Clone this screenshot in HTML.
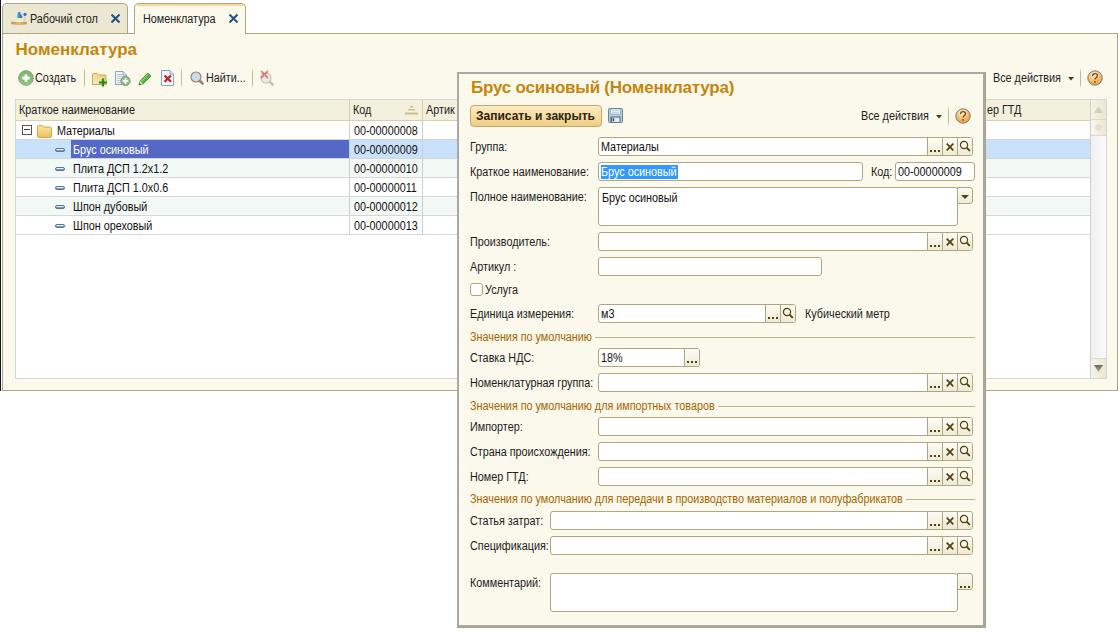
<!DOCTYPE html>
<html><head><meta charset="utf-8"><style>
html,body{margin:0;padding:0;}
body{width:1120px;height:633px;overflow:hidden;background:#fff;position:relative;font-family:'Liberation Sans', sans-serif;}
body>div,body>svg{position:absolute;}
.t{white-space:nowrap;}
.n{transform:scaleX(0.9);transform-origin:0 0;}
</style></head><body>
<div style="left:0px;top:0px;width:1px;height:391px;background:#0B1729"></div>
<div style="left:2px;top:3px;width:126px;height:31px;background:#ECE7D2;border:1px solid #B0A680;border-bottom:none;border-radius:5px 5px 0 0;box-sizing:border-box"></div>
<div style="left:2px;top:33px;width:1116px;height:358px;background:#FBF9EC;border:1px solid #B0A680;box-sizing:border-box"></div>
<div style="left:134px;top:3px;width:112px;height:31px;background:#FBF9EC;border:1px solid #B0A680;border-bottom:none;border-radius:5px 5px 0 0;box-sizing:border-box"></div>
<div style="left:136px;top:4px;width:108px;height:2px;background:#F6D9A0;border-radius:3px 3px 0 0"></div>
<div style="left:135px;top:33px;width:110px;height:1px;background:#FBF9EC"></div>
<div class="t n" style="left:30.3px;top:12px;font-size:12px;line-height:14px;font-weight:normal;color:#1C1C1C">Рабочий стол</div>
<div class="t n" style="left:142.8px;top:12px;font-size:12px;line-height:14px;font-weight:normal;color:#1C1C1C">Номенклатура</div>
<svg style="left:111px;top:14px" width="9" height="9" viewBox="0 0 9 9"><path d="M0.5 0.5L8.5 8.5M8.5 0.5L0.5 8.5" stroke="#22507C" stroke-width="2"/></svg>
<svg style="left:229px;top:14px" width="9" height="9" viewBox="0 0 9 9"><path d="M0.5 0.5L8.5 8.5M8.5 0.5L0.5 8.5" stroke="#22507C" stroke-width="2"/></svg>
<svg style="left:8px;top:8px" width="22" height="20" viewBox="0 0 22 20"><defs><linearGradient id="bd" x1="0" y1="0" x2="1" y2="0"><stop offset="0" stop-color="#D08E58"/><stop offset="0.5" stop-color="#E6B888"/><stop offset="1" stop-color="#C88A50"/></linearGradient><linearGradient id="sh" x1="0" y1="0" x2="1" y2="0"><stop offset="0" stop-color="#B0E0F4"/><stop offset="0.45" stop-color="#3C8CCC"/><stop offset="1" stop-color="#1A62A8"/></linearGradient></defs><path d="M3 13.8 L19 13.8 L18.5 16.3 Q11 17.6 3.5 16.3 Z" fill="url(#bd)"/><path d="M3.2 13.9 L5.5 12 L18 12 L19 13.9 Z" fill="#EED8BC"/><ellipse cx="11" cy="13" rx="4" ry="1" fill="#FFF6EA"/><path d="M7 12.8 L7 9.8 Q10.5 8 14 9.8 L14 12.8 Z" fill="#F2EEA0"/><path d="M8.3 9.6 L9.8 4.2 Q11 3.4 12.2 4.2 L14.6 9.6 Q11.5 10.6 8.3 9.6 Z" fill="url(#sh)"/><path d="M12 5 L16 6.2" stroke="#D4DCE4" stroke-width="1"/><rect x="16" y="7" width="1.8" height="5.2" fill="#D2D6DC"/><circle cx="17" cy="6.4" r="1.6" fill="#2C78C0"/></svg>
<div class="t" style="left:15.5px;top:40px;font-size:17px;line-height:20px;font-weight:bold;color:#C4860C">Номенклатура</div>
<svg style="left:18px;top:70px" width="16" height="16" viewBox="0 0 16 16"><defs><radialGradient id="gg" cx="50%" cy="40%" r="60%"><stop offset="0" stop-color="#6CB45A"/><stop offset="0.7" stop-color="#80C070"/><stop offset="1" stop-color="#A8D89A"/></radialGradient></defs><circle cx="8" cy="8" r="7.3" fill="url(#gg)" stroke="#8A8F88" stroke-width="1"/><path d="M8 4.2V11.8M4.2 8H11.8" stroke="#fff" stroke-width="2.8"/></svg>
<div class="t n" style="left:34.8px;top:71px;font-size:12px;line-height:14px;font-weight:normal;color:#1C1C1C">Создать</div>
<div style="left:84px;top:68px;width:1px;height:20px;background:linear-gradient(#FBF9EC,#C4B894 20%,#C4B894 80%,#FBF9EC)"></div>
<svg style="left:91px;top:72px" width="17" height="15" viewBox="0 0 17 15"><defs><linearGradient id="fpg" x1="0" y1="1" x2="1" y2="0"><stop offset="0" stop-color="#FBF0C0"/><stop offset="1" stop-color="#E8C870"/></linearGradient></defs><path d="M1.5 2.5 Q1.5 1.5 2.5 1.5 L6 1.5 L7.5 3 L14 3 Q15 3 15 4 L15 12.5 L1.5 12.5Z" fill="url(#fpg)" stroke="#CFA650"/><path d="M8 10.5H16M12 6.5V14.5" stroke="#1E8C1E" stroke-width="2.2"/></svg>
<svg style="left:114px;top:70px" width="17" height="17" viewBox="0 0 17 17"><path d="M1.5 1.5H9L12.5 5V14.5H1.5Z" fill="#F2F6FA" stroke="#8AA4BE"/><path d="M9 1.5V5H12.5" fill="#DDE6EE" stroke="#8AA4BE"/><path d="M3 4.5H8M3 6.5H10M3 8.5H7M3 10.5H7M3 12.5H7" stroke="#AFC2D6" stroke-width="0.9"/><circle cx="11.5" cy="11" r="4.6" fill="#8CC27A" stroke="#7E967A" stroke-width="1"/><path d="M11.5 8.3V13.7M8.8 11H14.2" stroke="#fff" stroke-width="1.8"/></svg>
<svg style="left:138px;top:71px" width="14" height="15" viewBox="0 0 14 15"><path d="M1 14 L2 10 L10 2 L13 5 L5 13Z" fill="#4DB83A" stroke="#2A7A22" stroke-width="0.7"/><path d="M3 10.5 L10.5 3" stroke="#A8E890" stroke-width="1"/><path d="M1 14 L2 10 L5 13Z" fill="#E8F0E0"/><path d="M1 14 L1.6 11.8 L3.2 13.4Z" fill="#24501C"/></svg>
<svg style="left:160px;top:69px" width="15" height="18" viewBox="0 0 15 18"><path d="M1.5 1.5H10L13.5 5V16.5H1.5Z" fill="#F2F6FA" stroke="#8AA4BE"/><path d="M10 1.5V5H13.5" fill="#DDE6EE" stroke="#8AA4BE"/><path d="M4.5 6.5L11 12.8M11 6.5L4.5 12.8" stroke="#C42020" stroke-width="2.2"/></svg>
<div style="left:181px;top:68px;width:1px;height:20px;background:linear-gradient(#FBF9EC,#C4B894 20%,#C4B894 80%,#FBF9EC)"></div>
<svg style="left:190px;top:71px;opacity:1" width="15" height="15" viewBox="0 0 15 15"><path d="M9 9L12.5 12.5" stroke="#A08068" stroke-width="2.6" stroke-linecap="round"/><circle cx="6" cy="6" r="5" fill="#CADCF0" stroke="#9A8272" stroke-width="1.2"/></svg>
<div class="t n" style="left:205.8px;top:71px;font-size:12px;line-height:14px;font-weight:normal;color:#1C1C1C">Найти...</div>
<div style="left:252px;top:68px;width:1px;height:20px;background:linear-gradient(#FBF9EC,#C4B894 20%,#C4B894 80%,#FBF9EC)"></div>
<svg style="left:260px;top:72px;opacity:0.45" width="15" height="15" viewBox="0 0 15 15"><path d="M9 9L12.5 12.5" stroke="#A08068" stroke-width="2.6" stroke-linecap="round"/><circle cx="6" cy="6" r="5" fill="#CADCF0" stroke="#9A8272" stroke-width="1.2"/></svg>
<svg style="left:260px;top:70px;opacity:0.55" width="9" height="9" viewBox="0 0 9 9"><path d="M1 1L8 8M8 1L1 8" stroke="#D03030" stroke-width="2"/></svg>
<div class="t n" style="left:993.3px;top:71px;font-size:12px;line-height:14px;font-weight:normal;color:#1C1C1C">Все действия</div>
<svg style="left:1068px;top:77px" width="6" height="4" viewBox="0 0 6 4"><path d="M0 0H6L3 3.5Z" fill="#4A3A10"/></svg>
<div style="left:1080px;top:68px;width:1px;height:20px;background:linear-gradient(#FBF9EC,#C4B894 20%,#C4B894 80%,#FBF9EC)"></div>
<svg style="left:1087px;top:70px" width="16" height="16" viewBox="0 0 16 16"><defs><radialGradient id="hg" cx="45%" cy="30%" r="75%"><stop offset="0" stop-color="#FFF4DE"/><stop offset="0.6" stop-color="#F6B860"/><stop offset="1" stop-color="#EE9A30"/></radialGradient></defs><circle cx="8" cy="8" r="7.2" fill="url(#hg)" stroke="#7E7A80" stroke-width="1"/><path d="M5.6 6.2 Q5.6 3.6 8 3.6 Q10.4 3.6 10.4 5.7 Q10.4 7 9 7.8 Q8 8.4 8 9.6" fill="none" stroke="#7A4A1E" stroke-width="1.35"/><circle cx="8" cy="11.9" r="0.9" fill="#7A4A1E"/></svg>
<div style="left:15px;top:99px;width:1092px;height:280px;background:#fff;border:1px solid #D6D6D6;box-sizing:border-box"></div>
<div style="left:16px;top:100px;width:1074px;height:20px;background:#F4F0DE"></div>
<div style="left:16px;top:120px;width:1074px;height:1px;background:#D8CFAD"></div>
<div style="left:349px;top:100px;width:1px;height:20px;background:#D6CDAE"></div>
<div style="left:422px;top:100px;width:1px;height:20px;background:#D6CDAE"></div>
<div class="t n" style="left:19.3px;top:103px;font-size:12px;line-height:14px;font-weight:normal;color:#1C1C1C">Краткое наименование</div>
<div class="t n" style="left:353.3px;top:103px;font-size:12px;line-height:14px;font-weight:normal;color:#1C1C1C">Код</div>
<div class="t n" style="left:426.3px;top:103px;font-size:12px;line-height:14px;font-weight:normal;color:#1C1C1C">Артик</div>
<div class="t n" style="left:987.3px;top:103px;font-size:12px;line-height:14px;font-weight:normal;color:#1C1C1C">ер ГТД</div>
<svg style="left:405px;top:106px" width="13" height="9" viewBox="0 0 13 9"><rect x="5" y="0" width="3" height="1.5" fill="#CDBF8C"/><rect x="3" y="3" width="7" height="1.5" fill="#CDBF8C"/><rect x="0" y="6.5" width="13" height="2" fill="#CDBF8C"/></svg>
<div style="left:16px;top:121px;width:1074px;height:18px;background:#FFFFFF"></div>
<div style="left:16px;top:139px;width:1074px;height:1px;background:#D2D7DC"></div>
<div style="left:349px;top:121px;width:1px;height:18px;background:#CBCFD3"></div>
<div style="left:422px;top:121px;width:1px;height:18px;background:#CBCFD3"></div>
<div style="left:22px;top:125px;width:10px;height:10px;border:1px solid #555;box-sizing:border-box;background:#fff"></div>
<div style="left:24px;top:129px;width:6px;height:1px;background:#444"></div>
<svg style="left:37px;top:125px" width="15" height="13" viewBox="0 0 15 13"><defs><linearGradient id="fg" x1="0" y1="0" x2="0" y2="1"><stop offset="0" stop-color="#FBE7A8"/><stop offset="1" stop-color="#E9C25C"/></linearGradient></defs><path d="M0.5 2 Q0.5 0.5 2 0.5 L5 0.5 L6.5 2 L13 2 Q14.5 2 14.5 3.5 L14.5 11 Q14.5 12.5 13 12.5 L2 12.5 Q0.5 12.5 0.5 11Z" fill="url(#fg)" stroke="#CFA64A"/></svg>
<div class="t n" style="left:57.3px;top:124px;font-size:12px;line-height:14px;font-weight:normal;color:#111">Материалы</div>
<div class="t n" style="left:353.8px;top:124px;font-size:12px;line-height:14px;font-weight:normal;color:#111">00-00000008</div>
<div style="left:16px;top:140px;width:1074px;height:18px;background:#C9E1FA"></div>
<div style="left:16px;top:158px;width:1074px;height:1px;background:#D2D7DC"></div>
<div style="left:349px;top:140px;width:1px;height:18px;background:#CBCFD3"></div>
<div style="left:422px;top:140px;width:1px;height:18px;background:#CBCFD3"></div>
<div style="left:71px;top:140px;width:278px;height:18px;background:#5468C6"></div>
<svg style="left:55px;top:148px" width="10" height="4" viewBox="0 0 10 4"><rect x="0.5" y="0.5" width="9" height="3" rx="1.5" fill="#7E9AB2" stroke="#587890"/><rect x="1.5" y="1" width="7" height="1" fill="#E4EEF5"/></svg>
<div class="t n" style="left:73.3px;top:143px;font-size:12px;line-height:14px;font-weight:normal;color:#fff">Брус осиновый</div>
<div class="t n" style="left:353.8px;top:143px;font-size:12px;line-height:14px;font-weight:normal;color:#111">00-00000009</div>
<div style="left:16px;top:159px;width:1074px;height:18px;background:#F2F8F3"></div>
<div style="left:16px;top:177px;width:1074px;height:1px;background:#D2D7DC"></div>
<div style="left:349px;top:159px;width:1px;height:18px;background:#CBCFD3"></div>
<div style="left:422px;top:159px;width:1px;height:18px;background:#CBCFD3"></div>
<svg style="left:55px;top:167px" width="10" height="4" viewBox="0 0 10 4"><rect x="0.5" y="0.5" width="9" height="3" rx="1.5" fill="#7E9AB2" stroke="#587890"/><rect x="1.5" y="1" width="7" height="1" fill="#E4EEF5"/></svg>
<div class="t n" style="left:73.3px;top:162px;font-size:12px;line-height:14px;font-weight:normal;color:#111">Плита ДСП 1.2x1.2</div>
<div class="t n" style="left:353.8px;top:162px;font-size:12px;line-height:14px;font-weight:normal;color:#111">00-00000010</div>
<div style="left:16px;top:178px;width:1074px;height:18px;background:#FFFFFF"></div>
<div style="left:16px;top:196px;width:1074px;height:1px;background:#D2D7DC"></div>
<div style="left:349px;top:178px;width:1px;height:18px;background:#CBCFD3"></div>
<div style="left:422px;top:178px;width:1px;height:18px;background:#CBCFD3"></div>
<svg style="left:55px;top:186px" width="10" height="4" viewBox="0 0 10 4"><rect x="0.5" y="0.5" width="9" height="3" rx="1.5" fill="#7E9AB2" stroke="#587890"/><rect x="1.5" y="1" width="7" height="1" fill="#E4EEF5"/></svg>
<div class="t n" style="left:73.3px;top:181px;font-size:12px;line-height:14px;font-weight:normal;color:#111">Плита ДСП 1.0x0.6</div>
<div class="t n" style="left:353.8px;top:181px;font-size:12px;line-height:14px;font-weight:normal;color:#111">00-00000011</div>
<div style="left:16px;top:197px;width:1074px;height:18px;background:#F2F8F3"></div>
<div style="left:16px;top:215px;width:1074px;height:1px;background:#D2D7DC"></div>
<div style="left:349px;top:197px;width:1px;height:18px;background:#CBCFD3"></div>
<div style="left:422px;top:197px;width:1px;height:18px;background:#CBCFD3"></div>
<svg style="left:55px;top:205px" width="10" height="4" viewBox="0 0 10 4"><rect x="0.5" y="0.5" width="9" height="3" rx="1.5" fill="#7E9AB2" stroke="#587890"/><rect x="1.5" y="1" width="7" height="1" fill="#E4EEF5"/></svg>
<div class="t n" style="left:73.3px;top:200px;font-size:12px;line-height:14px;font-weight:normal;color:#111">Шпон дубовый</div>
<div class="t n" style="left:353.8px;top:200px;font-size:12px;line-height:14px;font-weight:normal;color:#111">00-00000012</div>
<div style="left:16px;top:216px;width:1074px;height:18px;background:#FFFFFF"></div>
<div style="left:16px;top:234px;width:1074px;height:1px;background:#D2D7DC"></div>
<div style="left:349px;top:216px;width:1px;height:18px;background:#CBCFD3"></div>
<div style="left:422px;top:216px;width:1px;height:18px;background:#CBCFD3"></div>
<svg style="left:55px;top:224px" width="10" height="4" viewBox="0 0 10 4"><rect x="0.5" y="0.5" width="9" height="3" rx="1.5" fill="#7E9AB2" stroke="#587890"/><rect x="1.5" y="1" width="7" height="1" fill="#E4EEF5"/></svg>
<div class="t n" style="left:73.3px;top:219px;font-size:12px;line-height:14px;font-weight:normal;color:#111">Шпон ореховый</div>
<div class="t n" style="left:353.8px;top:219px;font-size:12px;line-height:14px;font-weight:normal;color:#111">00-00000013</div>
<div style="left:1090px;top:100px;width:1px;height:278px;background:#D0D0D0"></div>
<div style="left:1091px;top:100px;width:15px;height:278px;background:linear-gradient(90deg,#F0F0F0,#FAFAFA)"></div>
<div style="left:1091px;top:100px;width:15px;height:20px;background:linear-gradient(90deg,#F7F4E6,#EDE6CF);border-bottom:1px solid #D8D8D8;box-sizing:border-box"></div>
<div style="left:1091px;top:120px;width:15px;height:16px;background:linear-gradient(90deg,#FBF8EC,#EDE6CF);border-bottom:1px solid #D8D8D8;box-sizing:border-box"></div>
<svg style="left:1095px;top:124px" width="7" height="7" viewBox="0 0 7 7"><circle cx="3.5" cy="3.5" r="2.8" fill="#E4E2D8" stroke="#D8D6CC" stroke-width="0.6"/></svg>
<svg style="left:1094px;top:106px" width="9" height="7" viewBox="0 0 9 7"><path d="M0 7H9L4.5 0Z" fill="#CFCFC6"/></svg>
<div style="left:1091px;top:358px;width:15px;height:20px;background:linear-gradient(90deg,#F7F4E6,#EDE6CF);border-top:1px solid #D8D8D8;box-sizing:border-box"></div>
<svg style="left:1094px;top:365px" width="9" height="7" viewBox="0 0 9 7"><defs><linearGradient id="dg" x1="0" y1="0" x2="0" y2="1"><stop offset="0" stop-color="#666"/><stop offset="1" stop-color="#AAA"/></linearGradient></defs><path d="M0 0H9L4.5 7Z" fill="url(#dg)"/></svg>
<div style="left:457px;top:72px;width:529px;height:556px;background:#ACA27A"></div>
<div style="left:457px;top:72px;width:528px;height:555px;background:#FBF9EC;border:2px solid #A8A8A8;box-sizing:border-box"></div>
<div class="t" style="left:471px;top:78px;font-size:17px;line-height:20px;font-weight:bold;color:#C4860C;letter-spacing:-0.22px">Брус осиновый (Номенклатура)</div>
<div style="left:470px;top:105px;width:132px;height:22px;background:linear-gradient(#FBEBC2,#EFCE84);border:1px solid #C9A76A;border-radius:4px;box-sizing:border-box"></div>
<div class="t" style="left:476px;top:109px;font-size:12px;line-height:14px;font-weight:bold;color:#2A2410">Записать и закрыть</div>
<svg style="left:608px;top:108px" width="15" height="15" viewBox="0 0 15 15"><rect x="0.5" y="0.5" width="14" height="14" rx="1" fill="#B2CCE4" stroke="#6C8498"/><rect x="2.5" y="1" width="10" height="5" fill="#F4F8FB" stroke="#7C94A8" stroke-width="0.6"/><path d="M4 2.8H11M4 4.4H11" stroke="#A8CCDC" stroke-width="0.8"/><rect x="2.5" y="8.5" width="10" height="6" fill="#50687A"/><rect x="4" y="9.5" width="7.5" height="4.5" fill="#E8ECEE"/><rect x="4.6" y="10.2" width="1.6" height="3" fill="#34485A"/></svg>
<div class="t n" style="left:861.3px;top:109px;font-size:12px;line-height:14px;font-weight:normal;color:#1C1C1C">Все действия</div>
<svg style="left:936px;top:115px" width="6" height="4" viewBox="0 0 6 4"><path d="M0 0H6L3 3.5Z" fill="#4A3A10"/></svg>
<div style="left:948px;top:106px;width:1px;height:20px;background:linear-gradient(#FBF9EC,#C4B894 20%,#C4B894 80%,#FBF9EC)"></div>
<svg style="left:955px;top:108px" width="16" height="16" viewBox="0 0 16 16"><defs><radialGradient id="hg" cx="45%" cy="30%" r="75%"><stop offset="0" stop-color="#FFF4DE"/><stop offset="0.6" stop-color="#F6B860"/><stop offset="1" stop-color="#EE9A30"/></radialGradient></defs><circle cx="8" cy="8" r="7.2" fill="url(#hg)" stroke="#7E7A80" stroke-width="1"/><path d="M5.6 6.2 Q5.6 3.6 8 3.6 Q10.4 3.6 10.4 5.7 Q10.4 7 9 7.8 Q8 8.4 8 9.6" fill="none" stroke="#7A4A1E" stroke-width="1.35"/><circle cx="8" cy="11.9" r="0.9" fill="#7A4A1E"/></svg>
<div class="t n" style="left:469.8px;top:140px;font-size:12px;line-height:14px;font-weight:normal;color:#1C1C1C">Группа:</div>
<div style="left:598px;top:137px;width:375px;height:19px;background:#fff;border:1px solid #B0A680;border-radius:3px;box-sizing:border-box"></div>
<div style="left:927px;top:138px;width:45px;height:17px;background:linear-gradient(#FDFCF5,#EEEAD6);border-radius:0 2px 2px 0"></div>
<div style="left:927px;top:138px;width:1px;height:17px;background:#B0A680"></div>
<div style="left:930px;top:150px;width:2px;height:2px;background:#55400C"></div>
<div style="left:934px;top:150px;width:2px;height:2px;background:#55400C"></div>
<div style="left:938px;top:150px;width:2px;height:2px;background:#55400C"></div>
<div style="left:942px;top:138px;width:1px;height:17px;background:#B0A680"></div>
<svg style="left:946px;top:143px" width="8" height="8" viewBox="0 0 8 8"><path d="M0.7 0.7L7.3 7.3M7.3 0.7L0.7 7.3" stroke="#55400C" stroke-width="1.7"/></svg>
<div style="left:957px;top:138px;width:1px;height:17px;background:#B0A680"></div>
<svg style="left:959px;top:140px" width="12" height="12" viewBox="0 0 12 12"><circle cx="5" cy="5" r="3.6" fill="none" stroke="#55400C" stroke-width="1.2"/><path d="M7.6 7.6L10.8 10.8" stroke="#55400C" stroke-width="1.9"/></svg>
<div class="t n" style="left:600.8px;top:140px;font-size:12px;line-height:14px;font-weight:normal;color:#111">Материалы</div>
<div class="t n" style="left:469.8px;top:165px;font-size:12px;line-height:14px;font-weight:normal;color:#1C1C1C">Краткое наименование:</div>
<div style="left:598px;top:162px;width:265px;height:19px;background:#fff;border:1px solid #B0A680;border-radius:3px;box-sizing:border-box"></div>
<div style="left:601px;top:165px;width:77px;height:14px;background:#3399FF"></div>
<div class="t n" style="left:600.8px;top:165px;font-size:12px;line-height:14px;font-weight:normal;color:#fff">Брус осиновый</div>
<div class="t n" style="left:871.3px;top:165px;font-size:12px;line-height:14px;font-weight:normal;color:#1C1C1C">Код:</div>
<div style="left:895px;top:162px;width:80px;height:19px;background:#fff;border:1px solid #B0A680;border-radius:3px;box-sizing:border-box"></div>
<div class="t n" style="left:898.3px;top:165px;font-size:12px;line-height:14px;font-weight:normal;color:#111">00-00000009</div>
<div class="t n" style="left:469.8px;top:190px;font-size:12px;line-height:14px;font-weight:normal;color:#1C1C1C">Полное наименование:</div>
<div style="left:598px;top:187px;width:360px;height:39px;background:#fff;border:1px solid #B0A680;border-radius:3px;box-sizing:border-box"></div>
<div style="left:957px;top:187px;width:16px;height:17px;background:linear-gradient(#FBFAF3,#EFEBD8);border:1px solid #B0A680;border-radius:0 3px 3px 0;box-sizing:border-box"></div>
<svg style="left:961px;top:195px" width="8" height="4" viewBox="0 0 8 4"><path d="M0 0H8L4 4Z" fill="#5A4008"/></svg>
<div class="t n" style="left:601.8px;top:190.5px;font-size:12px;line-height:14px;font-weight:normal;color:#111">Брус осиновый</div>
<div class="t n" style="left:469.8px;top:235px;font-size:12px;line-height:14px;font-weight:normal;color:#1C1C1C">Производитель:</div>
<div style="left:598px;top:232px;width:375px;height:19px;background:#fff;border:1px solid #B0A680;border-radius:3px;box-sizing:border-box"></div>
<div style="left:927px;top:233px;width:45px;height:17px;background:linear-gradient(#FDFCF5,#EEEAD6);border-radius:0 2px 2px 0"></div>
<div style="left:927px;top:233px;width:1px;height:17px;background:#B0A680"></div>
<div style="left:930px;top:245px;width:2px;height:2px;background:#55400C"></div>
<div style="left:934px;top:245px;width:2px;height:2px;background:#55400C"></div>
<div style="left:938px;top:245px;width:2px;height:2px;background:#55400C"></div>
<div style="left:942px;top:233px;width:1px;height:17px;background:#B0A680"></div>
<svg style="left:946px;top:238px" width="8" height="8" viewBox="0 0 8 8"><path d="M0.7 0.7L7.3 7.3M7.3 0.7L0.7 7.3" stroke="#55400C" stroke-width="1.7"/></svg>
<div style="left:957px;top:233px;width:1px;height:17px;background:#B0A680"></div>
<svg style="left:959px;top:235px" width="12" height="12" viewBox="0 0 12 12"><circle cx="5" cy="5" r="3.6" fill="none" stroke="#55400C" stroke-width="1.2"/><path d="M7.6 7.6L10.8 10.8" stroke="#55400C" stroke-width="1.9"/></svg>
<div class="t n" style="left:469.8px;top:260px;font-size:12px;line-height:14px;font-weight:normal;color:#1C1C1C">Артикул :</div>
<div style="left:598px;top:257px;width:224px;height:19px;background:#fff;border:1px solid #B0A680;border-radius:3px;box-sizing:border-box"></div>
<div style="left:470px;top:283px;width:13px;height:13px;background:#fff;border:1px solid #B0A680;border-radius:3px;box-sizing:border-box"></div>
<div class="t n" style="left:485.3px;top:283px;font-size:12px;line-height:14px;font-weight:normal;color:#1C1C1C">Услуга</div>
<div class="t n" style="left:469.8px;top:307px;font-size:12px;line-height:14px;font-weight:normal;color:#1C1C1C">Единица измерения:</div>
<div style="left:598px;top:304px;width:198px;height:19px;background:#fff;border:1px solid #B0A680;border-radius:3px;box-sizing:border-box"></div>
<div style="left:765px;top:305px;width:30px;height:17px;background:linear-gradient(#FDFCF5,#EEEAD6);border-radius:0 2px 2px 0"></div>
<div style="left:765px;top:305px;width:1px;height:17px;background:#B0A680"></div>
<div style="left:768px;top:317px;width:2px;height:2px;background:#55400C"></div>
<div style="left:772px;top:317px;width:2px;height:2px;background:#55400C"></div>
<div style="left:776px;top:317px;width:2px;height:2px;background:#55400C"></div>
<div style="left:780px;top:305px;width:1px;height:17px;background:#B0A680"></div>
<svg style="left:782px;top:307px" width="12" height="12" viewBox="0 0 12 12"><circle cx="5" cy="5" r="3.6" fill="none" stroke="#55400C" stroke-width="1.2"/><path d="M7.6 7.6L10.8 10.8" stroke="#55400C" stroke-width="1.9"/></svg>
<div class="t n" style="left:600.8px;top:307px;font-size:12px;line-height:14px;font-weight:normal;color:#111">м3</div>
<div class="t n" style="left:805.3px;top:307px;font-size:12px;line-height:14px;font-weight:normal;color:#1C1C1C">Кубический метр</div>
<div class="t n" style="left:469.8px;top:330px;font-size:12px;line-height:14px;font-weight:normal;color:#A86400">Значения по умолчанию</div>
<div style="left:595px;top:337px;width:380px;height:1px;background:#BDB38E"></div>
<div class="t n" style="left:469.8px;top:351px;font-size:12px;line-height:14px;font-weight:normal;color:#1C1C1C">Ставка НДС:</div>
<div style="left:598px;top:348px;width:102px;height:19px;background:#fff;border:1px solid #B0A680;border-radius:3px;box-sizing:border-box"></div>
<div style="left:684px;top:349px;width:15px;height:17px;background:linear-gradient(#FDFCF5,#EEEAD6);border-radius:0 2px 2px 0"></div>
<div style="left:684px;top:349px;width:1px;height:17px;background:#B0A680"></div>
<div style="left:687px;top:361px;width:2px;height:2px;background:#55400C"></div>
<div style="left:691px;top:361px;width:2px;height:2px;background:#55400C"></div>
<div style="left:695px;top:361px;width:2px;height:2px;background:#55400C"></div>
<div class="t n" style="left:600.8px;top:351px;font-size:12px;line-height:14px;font-weight:normal;color:#111">18%</div>
<div class="t n" style="left:469.8px;top:376px;font-size:12px;line-height:14px;font-weight:normal;color:#1C1C1C">Номенклатурная группа:</div>
<div style="left:598px;top:373px;width:375px;height:19px;background:#fff;border:1px solid #B0A680;border-radius:3px;box-sizing:border-box"></div>
<div style="left:927px;top:374px;width:45px;height:17px;background:linear-gradient(#FDFCF5,#EEEAD6);border-radius:0 2px 2px 0"></div>
<div style="left:927px;top:374px;width:1px;height:17px;background:#B0A680"></div>
<div style="left:930px;top:386px;width:2px;height:2px;background:#55400C"></div>
<div style="left:934px;top:386px;width:2px;height:2px;background:#55400C"></div>
<div style="left:938px;top:386px;width:2px;height:2px;background:#55400C"></div>
<div style="left:942px;top:374px;width:1px;height:17px;background:#B0A680"></div>
<svg style="left:946px;top:379px" width="8" height="8" viewBox="0 0 8 8"><path d="M0.7 0.7L7.3 7.3M7.3 0.7L0.7 7.3" stroke="#55400C" stroke-width="1.7"/></svg>
<div style="left:957px;top:374px;width:1px;height:17px;background:#B0A680"></div>
<svg style="left:959px;top:376px" width="12" height="12" viewBox="0 0 12 12"><circle cx="5" cy="5" r="3.6" fill="none" stroke="#55400C" stroke-width="1.2"/><path d="M7.6 7.6L10.8 10.8" stroke="#55400C" stroke-width="1.9"/></svg>
<div class="t n" style="left:469.8px;top:399px;font-size:12px;line-height:14px;font-weight:normal;color:#A86400">Значения по умолчанию для импортных товаров</div>
<div style="left:718px;top:406px;width:257px;height:1px;background:#BDB38E"></div>
<div class="t n" style="left:469.8px;top:420px;font-size:12px;line-height:14px;font-weight:normal;color:#1C1C1C">Импортер:</div>
<div style="left:598px;top:417px;width:375px;height:19px;background:#fff;border:1px solid #B0A680;border-radius:3px;box-sizing:border-box"></div>
<div style="left:927px;top:418px;width:45px;height:17px;background:linear-gradient(#FDFCF5,#EEEAD6);border-radius:0 2px 2px 0"></div>
<div style="left:927px;top:418px;width:1px;height:17px;background:#B0A680"></div>
<div style="left:930px;top:430px;width:2px;height:2px;background:#55400C"></div>
<div style="left:934px;top:430px;width:2px;height:2px;background:#55400C"></div>
<div style="left:938px;top:430px;width:2px;height:2px;background:#55400C"></div>
<div style="left:942px;top:418px;width:1px;height:17px;background:#B0A680"></div>
<svg style="left:946px;top:423px" width="8" height="8" viewBox="0 0 8 8"><path d="M0.7 0.7L7.3 7.3M7.3 0.7L0.7 7.3" stroke="#55400C" stroke-width="1.7"/></svg>
<div style="left:957px;top:418px;width:1px;height:17px;background:#B0A680"></div>
<svg style="left:959px;top:420px" width="12" height="12" viewBox="0 0 12 12"><circle cx="5" cy="5" r="3.6" fill="none" stroke="#55400C" stroke-width="1.2"/><path d="M7.6 7.6L10.8 10.8" stroke="#55400C" stroke-width="1.9"/></svg>
<div class="t n" style="left:469.8px;top:445px;font-size:12px;line-height:14px;font-weight:normal;color:#1C1C1C">Страна происхождения:</div>
<div style="left:598px;top:442px;width:375px;height:19px;background:#fff;border:1px solid #B0A680;border-radius:3px;box-sizing:border-box"></div>
<div style="left:927px;top:443px;width:45px;height:17px;background:linear-gradient(#FDFCF5,#EEEAD6);border-radius:0 2px 2px 0"></div>
<div style="left:927px;top:443px;width:1px;height:17px;background:#B0A680"></div>
<div style="left:930px;top:455px;width:2px;height:2px;background:#55400C"></div>
<div style="left:934px;top:455px;width:2px;height:2px;background:#55400C"></div>
<div style="left:938px;top:455px;width:2px;height:2px;background:#55400C"></div>
<div style="left:942px;top:443px;width:1px;height:17px;background:#B0A680"></div>
<svg style="left:946px;top:448px" width="8" height="8" viewBox="0 0 8 8"><path d="M0.7 0.7L7.3 7.3M7.3 0.7L0.7 7.3" stroke="#55400C" stroke-width="1.7"/></svg>
<div style="left:957px;top:443px;width:1px;height:17px;background:#B0A680"></div>
<svg style="left:959px;top:445px" width="12" height="12" viewBox="0 0 12 12"><circle cx="5" cy="5" r="3.6" fill="none" stroke="#55400C" stroke-width="1.2"/><path d="M7.6 7.6L10.8 10.8" stroke="#55400C" stroke-width="1.9"/></svg>
<div class="t n" style="left:469.8px;top:470px;font-size:12px;line-height:14px;font-weight:normal;color:#1C1C1C">Номер ГТД:</div>
<div style="left:598px;top:467px;width:375px;height:19px;background:#fff;border:1px solid #B0A680;border-radius:3px;box-sizing:border-box"></div>
<div style="left:927px;top:468px;width:45px;height:17px;background:linear-gradient(#FDFCF5,#EEEAD6);border-radius:0 2px 2px 0"></div>
<div style="left:927px;top:468px;width:1px;height:17px;background:#B0A680"></div>
<div style="left:930px;top:480px;width:2px;height:2px;background:#55400C"></div>
<div style="left:934px;top:480px;width:2px;height:2px;background:#55400C"></div>
<div style="left:938px;top:480px;width:2px;height:2px;background:#55400C"></div>
<div style="left:942px;top:468px;width:1px;height:17px;background:#B0A680"></div>
<svg style="left:946px;top:473px" width="8" height="8" viewBox="0 0 8 8"><path d="M0.7 0.7L7.3 7.3M7.3 0.7L0.7 7.3" stroke="#55400C" stroke-width="1.7"/></svg>
<div style="left:957px;top:468px;width:1px;height:17px;background:#B0A680"></div>
<svg style="left:959px;top:470px" width="12" height="12" viewBox="0 0 12 12"><circle cx="5" cy="5" r="3.6" fill="none" stroke="#55400C" stroke-width="1.2"/><path d="M7.6 7.6L10.8 10.8" stroke="#55400C" stroke-width="1.9"/></svg>
<div class="t n" style="left:469.8px;top:492px;font-size:12px;line-height:14px;font-weight:normal;color:#A86400">Значения по умолчанию для передачи в производство материалов и полуфабрикатов</div>
<div style="left:906px;top:499px;width:69px;height:1px;background:#BDB38E"></div>
<div class="t n" style="left:469.8px;top:514px;font-size:12px;line-height:14px;font-weight:normal;color:#1C1C1C">Статья затрат:</div>
<div style="left:550px;top:511px;width:423px;height:19px;background:#fff;border:1px solid #B0A680;border-radius:3px;box-sizing:border-box"></div>
<div style="left:927px;top:512px;width:45px;height:17px;background:linear-gradient(#FDFCF5,#EEEAD6);border-radius:0 2px 2px 0"></div>
<div style="left:927px;top:512px;width:1px;height:17px;background:#B0A680"></div>
<div style="left:930px;top:524px;width:2px;height:2px;background:#55400C"></div>
<div style="left:934px;top:524px;width:2px;height:2px;background:#55400C"></div>
<div style="left:938px;top:524px;width:2px;height:2px;background:#55400C"></div>
<div style="left:942px;top:512px;width:1px;height:17px;background:#B0A680"></div>
<svg style="left:946px;top:517px" width="8" height="8" viewBox="0 0 8 8"><path d="M0.7 0.7L7.3 7.3M7.3 0.7L0.7 7.3" stroke="#55400C" stroke-width="1.7"/></svg>
<div style="left:957px;top:512px;width:1px;height:17px;background:#B0A680"></div>
<svg style="left:959px;top:514px" width="12" height="12" viewBox="0 0 12 12"><circle cx="5" cy="5" r="3.6" fill="none" stroke="#55400C" stroke-width="1.2"/><path d="M7.6 7.6L10.8 10.8" stroke="#55400C" stroke-width="1.9"/></svg>
<div class="t n" style="left:469.8px;top:539px;font-size:12px;line-height:14px;font-weight:normal;color:#1C1C1C">Спецификация:</div>
<div style="left:550px;top:536px;width:423px;height:19px;background:#fff;border:1px solid #B0A680;border-radius:3px;box-sizing:border-box"></div>
<div style="left:927px;top:537px;width:45px;height:17px;background:linear-gradient(#FDFCF5,#EEEAD6);border-radius:0 2px 2px 0"></div>
<div style="left:927px;top:537px;width:1px;height:17px;background:#B0A680"></div>
<div style="left:930px;top:549px;width:2px;height:2px;background:#55400C"></div>
<div style="left:934px;top:549px;width:2px;height:2px;background:#55400C"></div>
<div style="left:938px;top:549px;width:2px;height:2px;background:#55400C"></div>
<div style="left:942px;top:537px;width:1px;height:17px;background:#B0A680"></div>
<svg style="left:946px;top:542px" width="8" height="8" viewBox="0 0 8 8"><path d="M0.7 0.7L7.3 7.3M7.3 0.7L0.7 7.3" stroke="#55400C" stroke-width="1.7"/></svg>
<div style="left:957px;top:537px;width:1px;height:17px;background:#B0A680"></div>
<svg style="left:959px;top:539px" width="12" height="12" viewBox="0 0 12 12"><circle cx="5" cy="5" r="3.6" fill="none" stroke="#55400C" stroke-width="1.2"/><path d="M7.6 7.6L10.8 10.8" stroke="#55400C" stroke-width="1.9"/></svg>
<div class="t n" style="left:469.8px;top:576px;font-size:12px;line-height:14px;font-weight:normal;color:#1C1C1C">Комментарий:</div>
<div style="left:550px;top:573px;width:408px;height:39px;background:#fff;border:1px solid #B0A680;border-radius:3px;box-sizing:border-box"></div>
<div style="left:957px;top:573px;width:16px;height:17px;background:linear-gradient(#FBFAF3,#EFEBD8);border:1px solid #B0A680;border-radius:0 3px 3px 0;box-sizing:border-box"></div>
<div style="left:960px;top:586px;width:2px;height:2px;background:#55400C"></div>
<div style="left:964px;top:586px;width:2px;height:2px;background:#55400C"></div>
<div style="left:968px;top:586px;width:2px;height:2px;background:#55400C"></div>
</body></html>
